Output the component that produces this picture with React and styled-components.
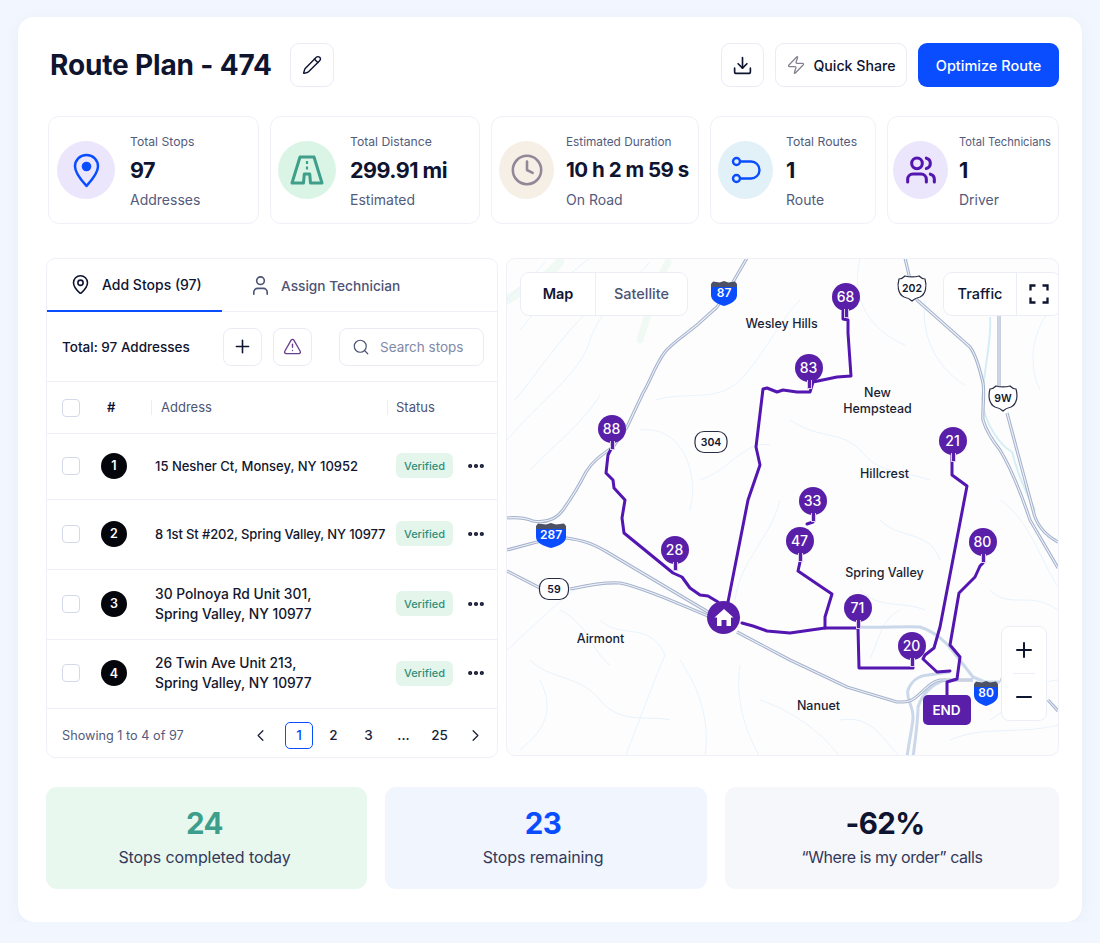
import React from 'react';
import styled, { createGlobalStyle } from 'styled-components';
import {
  ChevronLeft,
  ChevronRight,
  Clock,
  Download,
  Ellipsis,
  MapPin,
  Minus,
  Pencil,
  Plus,
  Search,
  TriangleAlert,
  User,
  Users,
  Zap,
} from 'lucide-react';

const GlobalStyle = createGlobalStyle`
  html, body {
    margin: 0;
    background: #f2f6fe;
    font-family: Inter, "Liberation Sans", sans-serif;
    color: #0f1430;
  }
  * { box-sizing: border-box; }
`;

const Page = styled.div`
  width: 1064px;
  height: 905px;
  margin: 17px 0 0 18px;
  padding: 26px 23px 0 28px;
  background: #fff;
  border-radius: 16px;
  box-shadow: 0 4px 14px rgba(120, 140, 190, 0.08);
`;

const Header = styled.header`
  display: flex;
  align-items: center;
  height: 44px;
  padding-left: 4px;
`;

const Title = styled.h1`
  margin: 0;
  font-size: 28px;
  font-weight: 700;
  letter-spacing: -0.15px;
  color: #0f1430;
`;

const OutlineButton = styled.button`
  display: flex;
  align-items: center;
  justify-content: center;
  gap: 7px;
  height: 44px;
  width: ${(p) => p.$width || 44}px;
  padding: 0;
  margin-left: ${(p) => p.$left || 0}px;
  background: #fff;
  border: 1.5px solid #eaebf5;
  border-radius: 9px;
  font: 500 14.2px Inter, sans-serif;
  color: #0f1430;
`;

const PrimaryButton = styled.button`
  height: 44px;
  width: 141px;
  margin-left: 11px;
  border: 0;
  border-radius: 9px;
  background: #0a4dff;
  color: #fff;
  font: 500 14.5px Inter, sans-serif;
`;

const Spacer = styled.div`
  flex: 1;
`;

const StatsRow = styled.section`
  display: grid;
  grid-template-columns: 211px 210px 208px 166px 172px;
  gap: 11px;
  margin: 29px 0 0 2px;
`;

const StatCard = styled.div`
  display: flex;
  align-items: center;
  height: 108px;
  padding-left: ${(p) => p.$pad}px;
  gap: ${(p) => p.$gap}px;
  border: 1.5px solid #f0f1f8;
  border-radius: 11px;
`;

const IconCircle = styled.div`
  flex: none;
  display: flex;
  align-items: center;
  justify-content: center;
  width: ${(p) => p.$size || 58}px;
  height: 58px;
  border-radius: 50%;
  background: ${(p) => p.$bg};
  color: ${(p) => p.$fg};
`;

const StatText = styled.div`
  display: flex;
  flex-direction: column;
  padding-top: 2px;
  white-space: nowrap;
`;

const StatLabel = styled.div`
  font-size: ${(p) => p.$size || 12.2}px;
  line-height: 16px;
  color: #535b7c;
`;

const StatValue = styled.div`
  margin-top: 4px;
  font-size: ${(p) => p.$size || 21.5}px;
  line-height: 32px;
  font-weight: 700;
  letter-spacing: -0.5px;
`;

const StatSub = styled.div`
  margin-top: 5px;
  font-size: 14px;
  line-height: 18px;
  color: #535b7c;
`;

const Panels = styled.section`
  display: flex;
  gap: 8px;
  margin-top: 34px;
`;

const ListPanel = styled.div`
  width: 452px;
  height: 500px;
  border: 1.5px solid #f0f1f8;
  border-radius: 9px;
  overflow: hidden;
`;

const Tabs = styled.div`
  display: flex;
  height: 53px;
  border-bottom: 1.5px solid #eef0f7;
`;

const Tab = styled.div`
  display: flex;
  align-items: center;
  gap: ${(p) => p.$gap}px;
  width: ${(p) => p.$width}px;
  height: 53px;
  padding-left: ${(p) => p.$pad}px;
  font-size: ${(p) => (p.$active ? 14 : 13.7)}px;
  font-weight: 500;
  white-space: nowrap;
  color: ${(p) => (p.$active ? '#0f1430' : '#4c5474')};
  border-bottom: ${(p) => (p.$active ? '2.5px solid #0a4dff' : '0')};
`;

const Toolbar = styled.div`
  display: flex;
  align-items: center;
  height: 70px;
  padding-left: 15px;
  border-bottom: 1.5px solid #eef0f7;
`;

const ToolbarTitle = styled.div`
  width: 161px;
  font-size: 13.5px;
  font-weight: 500;
  white-space: nowrap;
`;

const SquareButton = styled.button`
  display: flex;
  align-items: center;
  justify-content: center;
  width: 39px;
  height: 38px;
  padding: 0;
  margin-left: ${(p) => p.$left || 0}px;
  background: #fff;
  border: 1.5px solid #eaebf5;
  border-radius: 8px;
  color: ${(p) => p.$color || '#0f1430'};
`;

const SearchBox = styled.div`
  display: flex;
  align-items: center;
  gap: 10px;
  width: 145px;
  height: 38px;
  margin-left: 27px;
  padding-left: 12px;
  border: 1.5px solid #eaebf5;
  border-radius: 8px;
  font-size: 13.5px;
  color: #8089a6;
  white-space: nowrap;
`;

const Row = styled.div`
  display: grid;
  grid-template-columns: 39px 54px 241px 70px 20px;
  align-items: center;
  height: ${(p) => p.$height}px;
  padding: 0 0 ${(p) => p.$lift || 0}px 15px;
  border-bottom: 1.5px solid #eef0f7;
`;

const Checkbox = styled.span`
  display: block;
  width: 18px;
  height: 18px;
  border: 1.5px solid #d5d8e8;
  border-radius: 4px;
  background: #fff;
`;

const HeadCell = styled.div`
  font-size: 13px;
  color: ${(p) => (p.$strong ? '#0f1430' : '#4c5474')};
  font-weight: ${(p) => (p.$strong ? 600 : 400)};
  padding-left: ${(p) => p.$pad || 0}px;
  margin-left: ${(p) => p.$shift || 0}px;
  border-left: ${(p) => (p.$rule ? '1.5px solid #eceef6' : '0')};
  line-height: 15px;
  white-space: nowrap;
`;

const Badge = styled.span`
  display: flex;
  align-items: center;
  justify-content: center;
  width: 26px;
  height: 26px;
  border-radius: 50%;
  background: #05060c;
  color: #fff;
  font-size: 12.5px;
  font-weight: 600;
`;

const Address = styled.div`
  font-size: ${(p) => p.$size}px;
  line-height: 20px;
  font-weight: 500;
  color: #12162e;
  white-space: pre-line;
  letter-spacing: ${(p) => p.$spacing}px;
`;

const Verified = styled.span`
  display: flex;
  align-items: center;
  justify-content: center;
  width: 57px;
  height: 25px;
  border-radius: 6px;
  background: #e4f6ec;
  color: #2f8f7a;
  font-size: 11px;
  font-weight: 500;
`;

const Pager = styled.div`
  display: flex;
  align-items: center;
  height: 50px;
  padding: 2px 0 0 15px;
`;

const PagerNote = styled.div`
  width: 183px;
  font-size: 12.7px;
  color: #535b7c;
  white-space: nowrap;
`;

const PageCell = styled.span`
  display: flex;
  align-items: center;
  justify-content: center;
  width: ${(p) => p.$width || 35}px;
  height: 27px;
  font-size: 13.5px;
  font-weight: 500;
  color: #1a1f3a;
`;

const PageCurrent = styled(PageCell)`
  width: 28px;
  margin: 0 3px 0 10px;
  border: 1.5px solid #0a4dff;
  border-radius: 5px;
  color: #0a4dff;
`;

const MapPanel = styled.div`
  position: relative;
  width: 553px;
  height: 498px;
  border: 1.5px solid #f0f1f8;
  border-radius: 9px;
  overflow: hidden;
  background: #fdfdfe;
`;

const MapCanvas = styled.svg`
  position: absolute;
  left: -1.5px;
  top: -1.5px;
`;

const MapControlGroup = styled.div`
  position: absolute;
  top: 12.5px;
  left: ${(p) => p.$left}px;
  display: flex;
  height: 44px;
  background: #fff;
  border: 1.5px solid #eceef6;
  border-radius: 9px;
`;

const MapControl = styled.div`
  display: flex;
  align-items: center;
  justify-content: center;
  width: ${(p) => p.$width}px;
  font-size: 14.5px;
  font-weight: ${(p) => (p.$strong ? 600 : 500)};
  color: ${(p) => p.$color || '#0f1430'};
  border-left: ${(p) => (p.$rule ? '1.5px solid #eceef6' : '0')};
`;

const ZoomControl = styled.div`
  position: absolute;
  left: 494px;
  top: 367px;
  display: flex;
  flex-direction: column;
  align-items: center;
  width: 46px;
  height: 95px;
  background: #fff;
  border: 1.5px solid #eceef6;
  border-radius: 8px;
  color: #0f1430;
`;

const ZoomPart = styled.div`
  display: flex;
  align-items: center;
  justify-content: center;
  height: 47px;
  width: 100%;
`;

const ZoomRule = styled.div`
  width: 22px;
  height: 1.5px;
  background: #eef0f7;
`;

const MapLabel = styled.div`
  position: absolute;
  left: ${(p) => p.$x - 507.5}px;
  top: ${(p) => p.$y - 259.5}px;
  transform: translate(-50%, -50%);
  font-size: 12.5px;
  line-height: 16px;
  font-weight: 500;
  text-align: center;
  white-space: pre-line;
  color: #1a1f36;
`;

const Pin = styled.div`
  position: absolute;
  left: ${(p) => p.$x - 507.5}px;
  top: ${(p) => p.$y - 259.5}px;
  width: 28px;
  height: 28px;
  margin: -14px 0 0 -14px;
  display: flex;
  align-items: center;
  justify-content: center;
  border-radius: 50%;
  background: #5a1fa8;
  color: #fff;
  font-size: 14px;
  font-weight: 500;
  &::after {
    content: '';
    position: absolute;
    left: 12.5px;
    top: 26px;
    width: 3px;
    height: 8px;
    background: #5a1fa8;
    border: 0.5px solid #d9cdee;
    border-top: 0;
  }
`;

const HomePin = styled.div`
  position: absolute;
  left: ${724 - 507.5}px;
  top: ${618 - 259.5}px;
  width: 33px;
  height: 33px;
  margin: -16.5px 0 0 -16.5px;
  display: flex;
  align-items: center;
  justify-content: center;
  border-radius: 50%;
  background: #5a1fa8;
`;

const EndPin = styled.div`
  position: absolute;
  left: ${923 - 507.5}px;
  top: ${695 - 259.5}px;
  width: 48px;
  height: 30px;
  display: flex;
  align-items: center;
  justify-content: center;
  border-radius: 5px;
  background: #5a1fa8;
  color: #fff;
  font-size: 13.5px;
  font-weight: 600;
`;

const Summary = styled.section`
  display: grid;
  grid-template-columns: 321px 322px 334px;
  gap: 18px;
  margin-top: 29px;
`;

const SummaryCard = styled.div`
  display: flex;
  flex-direction: column;
  align-items: center;
  height: 102px;
  padding: 17px ${(p) => p.$nudge || 0}px 0 0;
  border-radius: 11px;
  background: ${(p) => p.$bg};
`;

const SummaryValue = styled.div`
  font-size: 29.5px;
  line-height: 38px;
  font-weight: 700;
  letter-spacing: -0.6px;
  margin-right: ${(p) => p.$nudge || 0}px;
  color: ${(p) => p.$color};
`;

const SummaryLabel = styled.div`
  margin-top: 5px;
  font-size: 16px;
  line-height: 20px;
  letter-spacing: ${(p) => p.$spacing || -0.1}px;
  color: #33395a;
`;

const RoadIcon = () => (
  <svg width="36" height="32" viewBox="0 0 36 32" fill="none" stroke="currentColor" strokeWidth="3" strokeLinejoin="round">
    <path d="M11 3h14l8 26H21.500l-.8-9h-5.400l-.8 9H3z" />
    <path d="M18 7v3M18 12.500v3" strokeWidth="2.200" />
  </svg>
);

const RoutesIcon = () => (
  <svg width="30" height="30" viewBox="0 0 30 30" fill="none" stroke="currentColor" strokeWidth="2.4">
    <circle cx="5.5" cy="6.5" r="3.5" />
    <circle cx="5.5" cy="23.5" r="3.5" />
    <path d="M9 6.5h11a8.500 8.500 0 0 1 0 17H9" />
  </svg>
);

const StopPinIcon = () => (
  <svg width="27" height="35" viewBox="0 0 27 35" fill="none" stroke="currentColor" strokeWidth="2.5" strokeLinejoin="round">
    <path d="M13.500 2C6.800 2 2 7 2 13.500C2 20.500 9 28 13.500 33C18 28 25 20.500 25 13.500C25 7 20.200 2 13.500 2z" />
    <circle cx="13.500" cy="13.500" r="4.800" fill="currentColor" stroke="none" />
  </svg>
);

const CornersIcon = () => (
  <svg width="20" height="20" viewBox="0 0 20 20" fill="none" stroke="currentColor" strokeWidth="2.3">
    <path d="M1.500 6.500V1.500H6.500M13.500 1.500H18.500V6.500M18.500 13.500V18.500H13.500M6.500 18.500H1.500V13.500" />
  </svg>
);

const HomeIcon = () => (
  <svg width="20" height="19" viewBox="0 0 20 19">
    <path d="M10 1L19.500 9.500H17V18H12.500V12H7.500V18H3V9.500H.5z" fill="#fff" />
  </svg>
);

const stats = [
  { label: 'Total Stops', value: '97', sub: 'Addresses', bg: '#ebe6fb', fg: '#0a4dff', pad: 8, gap: 15, icon: <StopPinIcon /> },
  { label: 'Total Distance', value: '299.91 mi', sub: 'Estimated', bg: '#daf5e6', fg: '#3f9f8a', pad: 7, gap: 14, icon: <RoadIcon /> },
  { label: 'Estimated Duration', labelSize: 11.8, value: '10 h 2 m 59 s', valueSize: 20.5, sub: 'On Road', bg: '#f6efe6', fg: '#8f8898', pad: 7, gap: 12, size: 55, icon: <Clock size={34} strokeWidth={1.8} /> },
  { label: 'Total Routes', value: '1', sub: 'Route', bg: '#e2f1f7', fg: '#0a4dff', pad: 7, gap: 13, size: 55, icon: <RoutesIcon /> },
  { label: 'Total Technicians', labelSize: 11.2, value: '1', sub: 'Driver', bg: '#ebe6fb', fg: '#5316b0', pad: 5, gap: 11, size: 55, icon: <Users size={32} strokeWidth={2.3} /> },
];

const addresses = [
  { n: 1, text: '15 Nesher Ct, Monsey, NY 10952', height: 66, size: 13, spacing: 0 },
  { n: 2, text: '8 1st St #202, Spring Valley, NY 10977', height: 70, size: 13, spacing: -0.14 },
  { n: 3, text: '30 Polnoya Rd Unit 301,\nSpring Valley, NY 10977', height: 70, size: 13.8, spacing: 0 },
  { n: 4, text: '26 Twin Ave Unit 213,\nSpring Valley, NY 10977', height: 69, size: 13.8, spacing: 0 },
];

const streams = [
  'M520 330C545 300 560 280 590 258',
  'M507 300C520 285 530 280 545 262',
  'M515 400C540 370 565 330 600 300',
  'M507 440C540 400 580 375 590 340C600 310 625 290 650 262',
  'M530 470C560 440 585 420 600 395',
  'M655 400C690 390 720 405 745 375C770 345 780 320 800 300',
  'M640 430C680 425 700 470 690 510',
  'M700 480C730 470 745 440 770 445',
  'M790 420C820 440 840 430 860 450C880 475 900 470 930 480',
  'M860 258C850 300 870 330 905 345',
  'M925 300C920 340 940 370 965 385',
  'M1060 300C1035 320 1025 360 1040 390',
  'M780 500C770 540 740 560 735 600',
  'M1000 500C1030 520 1040 560 1060 590',
  'M990 590C1010 610 1030 590 1058 610',
  'M880 520C900 540 930 530 940 560',
  'M860 590C880 610 900 600 925 610',
  'M507 650C540 620 560 600 575 590',
  'M530 660C550 680 580 675 600 700C620 725 650 715 670 720',
  'M540 680C555 710 545 730 520 750',
  'M600 620C620 640 650 620 665 655C650 690 640 720 625 757',
  'M680 660C700 690 710 720 705 757',
  'M740 665C735 700 745 730 760 757',
  'M760 700C790 710 820 730 840 757',
  'M840 720C870 715 880 735 900 757',
  'M950 740C985 725 1020 735 1058 725',
  'M990 720C1020 700 1040 680 1058 680',
  'M870 658C880 640 880 620 900 610',
  'M560 610C590 625 590 650 610 665',
];

const roads = [
  'M747 258L733 282L717 307L697 325C685 335 672 343 665 352C655 365 650 382 643 393L627 427L613 447C600 456 592 462 586 472C578 488 570 500 563 510C555 521 545 523 533 521C525 518 517 517 507 518',
  'M507 550L537 542L567 538C580 540 590 542 607 552L708 612M737 632L790 660L847 687L897 702C905 702 910 702 915 698C925 690 930 682 940 680H973',
  'M507 571L540 588M570 589C590 585 605 582 620 583C640 587 670 600 708 616',
  'M905 258L912 288L917 300L970 347C976 355 980 370 983 383C985 395 982 410 983 420C986 430 992 440 1000 450C1012 470 1020 490 1030 520L1058 568',
  'M999 310V398M1007 413L1033 510C1036 525 1045 535 1058 542',
  'M1000 680H1010M1048 700L1058 711',
];

const lightRoads = [
  'M858 627C880 628 905 626 920 627C930 630 940 637 948 645L973 677L985 682H1000',
  'M907 757C910 735 913 725 913 717C913 705 906 700 908 690C912 680 918 676 928 675L950 672',
  'M913 757C916 735 918 720 918 707C922 695 930 685 945 680',
];

const routes = [
  'M613 445L608 455L606 473L613 480L614 488L625 500L622 518L624 533L673 573L682 577L690 588L700 595L708 596L718 602',
  'M728 602L748 500L760 465L756 447L763 389L767 388L777 392L783 390L797 392L810 392L813 382L837 377L851 376L848 333L848 320L843 319V311',
  'M952 453V475L967 486L940 627L934 648L925 655L923 659L937 672L950 671',
  'M983 563L980 566L975 577L959 593L950 645L960 657L957 679L947 682V697',
  'M813 515V522L807 524',
  'M800 562L798 571L823 588L832 594L825 617V628',
  'M742 623L753 626L767 631L790 633L825 628L858 628L859 668H913V660',
];

const pins = [
  { id: '68', x: 846, y: 297 },
  { id: '83', x: 809, y: 368 },
  { id: '88', x: 612, y: 429 },
  { id: '21', x: 953, y: 441 },
  { id: '33', x: 813, y: 501 },
  { id: '47', x: 800, y: 541 },
  { id: '80', x: 983, y: 542 },
  { id: '28', x: 675, y: 550 },
  { id: '71', x: 858, y: 608 },
  { id: '20', x: 912, y: 646 },
];

const labels = [
  { text: 'Wesley Hills', x: 782, y: 324 },
  { text: 'New\nHempstead', x: 878, y: 401 },
  { text: 'Hillcrest', x: 885, y: 474 },
  { text: 'Spring Valley', x: 885, y: 573 },
  { text: 'Airmont', x: 601, y: 639 },
  { text: 'Nanuet', x: 819, y: 706 },
];

const InterstateShield = ({ x, y, w, label }) => (
  <g transform={`translate(${x} ${y})`}>
    <path d={`M${-w} -9L${-w + 2} -11.5L${-w / 3} -10.500L0 -12L${w / 3} -10.500L${w - 2} -11.500L${w} -9V-6H${-w}z`} fill="#4d5166" />
    <path d={`M${-w} -6H${w}V2C${w} 8 ${w / 2} 11 0 13C${-w / 2} 11 ${-w} 8 ${-w} 2z`} fill="#0a4dff" />
    <text y="4" textAnchor="middle" fontSize="12" fontWeight="600" fill="#fff" fontFamily="Inter, sans-serif">{label}</text>
  </g>
);

const UsShield = ({ x, y, label }) => (
  <g transform={`translate(${x} ${y})`}>
    <path d="M-13 -9C-10 -9 -9 -10 -7 -12C-3 -11 3 -11 7 -12C9 -10 10 -9 13 -9C15 -2 14 6 8 9C4 10 2 11 0 13C-2 11 -4 10 -8 9C-14 6 -15 -2 -13 -9z" fill="#fff" stroke="#2a2e45" strokeWidth="1.2" />
    <text y="4" textAnchor="middle" fontSize="10.500" fontWeight="600" fill="#12162e" fontFamily="Inter, sans-serif">{label}</text>
  </g>
);

const StateShield = ({ x, y, w, label }) => (
  <g transform={`translate(${x} ${y})`}>
    <rect x={-w} y="-10.500" width={w * 2} height="21" rx="9" fill="#fff" stroke="#2a2e45" strokeWidth="1.200" />
    <text y="4" textAnchor="middle" fontSize="10.500" fontWeight="600" fill="#12162e" fontFamily="Inter, sans-serif">{label}</text>
  </g>
);

const MapArt = () => (
  <MapCanvas width="553" height="498" viewBox="506 258 553 498" fill="none">
    <path d="M507 300C530 285 545 280 560 262" stroke="#f1f9f4" strokeWidth="9" strokeLinecap="round" />
    <path d="M640 340C650 310 655 285 668 262" stroke="#f1f9f4" strokeWidth="7" strokeLinecap="round" />
    {streams.map((d) => (
      <path key={d} d={d} stroke="#e8f3fc" strokeWidth="1" />
    ))}
    <path d="M990 317C992 340 985 360 982 400C985 425 1000 445 1012 452C1018 475 1025 490 1035 510" stroke="#d5eef5" strokeWidth="2" />
    {lightRoads.map((d) => (
      <path key={d} d={d} stroke="#cbd8e9" strokeWidth="3" strokeLinejoin="round" />
    ))}
    {roads.map((d) => (
      <g key={d}>
        <path d={d} stroke="#a6b3cd" strokeWidth="3.200" strokeLinejoin="round" />
        <path d={d} stroke="#eef2f8" strokeWidth="1.100" strokeLinejoin="round" />
      </g>
    ))}
    {routes.map((d) => (
      <path key={d} d={d} stroke="#5316b0" strokeWidth="3" strokeLinejoin="round" strokeLinecap="round" />
    ))}
    <InterstateShield x={724} y={293} w={13} label="87" />
    <InterstateShield x={551} y={535} w={15} label="287" />
    <InterstateShield x={986} y={693} w={12} label="80" />
    <UsShield x={912} y={288} label="202" />
    <UsShield x={1003} y={398} label="9W" />
    <StateShield x={711} y={442} w={16} label="304" />
    <StateShield x={554} y={589} w={14.500} label="59" />
  </MapCanvas>
);

const App = () => (
  <>
    <GlobalStyle />
    <Page>
      <Header>
        <Title>Route Plan - 474</Title>
        <OutlineButton $left={18} aria-label="Edit">
          <Pencil size={20} strokeWidth={1.7} />
        </OutlineButton>
        <Spacer />
        <OutlineButton $width={43} aria-label="Download">
          <Download size={21} strokeWidth={1.9} />
        </OutlineButton>
        <OutlineButton $width={132} $left={11}>
          <Zap size={20} strokeWidth={1.5} color="#85808f" />
          Quick Share
        </OutlineButton>
        <PrimaryButton>Optimize Route</PrimaryButton>
      </Header>

      <StatsRow>
        {stats.map((s) => (
          <StatCard key={s.label} $pad={s.pad} $gap={s.gap}>
            <IconCircle $bg={s.bg} $fg={s.fg} $size={s.size || 58}>
              {s.icon}
            </IconCircle>
            <StatText>
              <StatLabel $size={s.labelSize}>{s.label}</StatLabel>
              <StatValue $size={s.valueSize}>{s.value}</StatValue>
              <StatSub>{s.sub}</StatSub>
            </StatText>
          </StatCard>
        ))}
      </StatsRow>

      <Panels>
        <ListPanel>
          <Tabs>
            <Tab $active $width={175} $pad={23} $gap={11}>
              <MapPin size={21} strokeWidth={1.8} />
              Add Stops (97)
            </Tab>
            <Tab $width={220} $pad={27} $gap={9}>
              <User size={23} strokeWidth={1.7} />
              Assign Technician
            </Tab>
          </Tabs>
          <Toolbar>
            <ToolbarTitle>Total: 97 Addresses</ToolbarTitle>
            <SquareButton aria-label="Add">
              <Plus size={21} strokeWidth={1.8} />
            </SquareButton>
            <SquareButton $left={11} $color="#6b3f8f" aria-label="Warnings">
              <TriangleAlert size={19} strokeWidth={1.7} />
            </SquareButton>
            <SearchBox>
              <Search size={18} strokeWidth={1.6} color="#4c5474" />
              Search stops
            </SearchBox>
          </Toolbar>
          <Row $height={52}>
            <Checkbox />
            <HeadCell $strong $shift={6}>#</HeadCell>
            <HeadCell $rule $pad={9} $shift={-4}>Address</HeadCell>
            <HeadCell $rule $pad={8} $shift={-9}>Status</HeadCell>
          </Row>
          {addresses.map((a) => (
            <Row key={a.n} $height={a.height} $lift={2}>
              <Checkbox />
              <Badge>{a.n}</Badge>
              <Address $size={a.size} $spacing={a.spacing}>{a.text}</Address>
              <Verified>Verified</Verified>
              <Ellipsis size={20} strokeWidth={3} />
            </Row>
          ))}
          <Pager>
            <PagerNote>Showing 1 to 4 of 97</PagerNote>
            <PageCell $width={30}>
              <ChevronLeft size={19} strokeWidth={1.6} />
            </PageCell>
            <PageCurrent>1</PageCurrent>
            <PageCell>2</PageCell>
            <PageCell>3</PageCell>
            <PageCell>...</PageCell>
            <PageCell $width={37}>25</PageCell>
            <PageCell>
              <ChevronRight size={19} strokeWidth={1.6} />
            </PageCell>
          </Pager>
        </ListPanel>

        <MapPanel>
          <MapArt />
          {labels.map((l) => (
            <MapLabel key={l.text} $x={l.x} $y={l.y}>{l.text}</MapLabel>
          ))}
          {pins.map((p) => (
            <Pin key={p.id} $x={p.x} $y={p.y}>{p.id}</Pin>
          ))}
          <HomePin>
            <HomeIcon />
          </HomePin>
          <EndPin>END</EndPin>
          <MapControlGroup $left={13}>
            <MapControl $width={74} $strong>Map</MapControl>
            <MapControl $width={92} $rule $color="#4c5474">Satellite</MapControl>
          </MapControlGroup>
          <MapControlGroup $left={436}>
            <MapControl $width={72}>Traffic</MapControl>
            <MapControl $width={44} $rule>
              <CornersIcon />
            </MapControl>
          </MapControlGroup>
          <ZoomControl>
            <ZoomPart><Plus size={24} strokeWidth={2} /></ZoomPart>
            <ZoomRule />
            <ZoomPart><Minus size={24} strokeWidth={2} /></ZoomPart>
          </ZoomControl>
        </MapPanel>
      </Panels>

      <Summary>
        <SummaryCard $bg="#e8f8ef" $nudge={4}>
          <SummaryValue $color="#3d9f8b">24</SummaryValue>
          <SummaryLabel>Stops completed today</SummaryLabel>
        </SummaryCard>
        <SummaryCard $bg="#f1f5fe" $nudge={6}>
          <SummaryValue $color="#0a4dff">23</SummaryValue>
          <SummaryLabel>Stops remaining</SummaryLabel>
        </SummaryCard>
        <SummaryCard $bg="#f6f7fb">
          <SummaryValue $color="#0f1430" $nudge={14}>-62%</SummaryValue>
          <SummaryLabel $spacing={-0.45}>“Where is my order” calls</SummaryLabel>
        </SummaryCard>
      </Summary>
    </Page>
  </>
);

export default App;
